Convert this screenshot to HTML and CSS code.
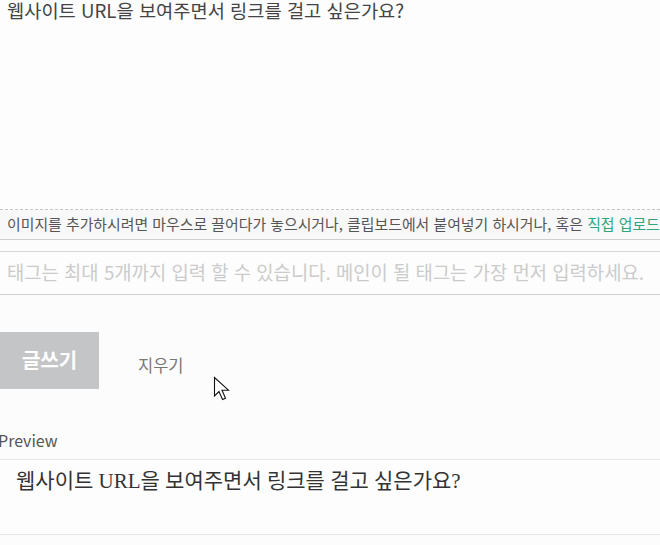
FILE: index.html
```html
<!DOCTYPE html>
<html lang="ko">
<head>
    <meta charset="UTF-8">
    <title>글쓰기</title>
    <link rel="stylesheet" href="styles.css">
</head>
<body>
    <div class="write-form">
        <div class="editor">
            <div class="editor-text">웹사이트 URL을 보여주면서 링크를 걸고 싶은가요?</div>
        </div>
        <div class="upload-hint">
            이미지를 추가하시려면 마우스로 끌어다가 놓으시거나, 클립보드에서 붙여넣기 하시거나, 혹은 <a href="#" class="upload-link">직접 업로드</a>하세요.
        </div>

        <div class="tag-input">태그는 최대 5개까지 입력 할 수 있습니다. 메인이 될 태그는 가장 먼저 입력하세요.</div>

        <div class="actions">
            <button class="submit-btn">글쓰기</button>
            <button class="clear-btn">지우기</button>
        </div>

        <div class="preview-label">Preview</div>
        <div class="preview">
            <p>웹사이트 URL을 보여주면서 링크를 걸고 싶은가요?</p>
        </div>
    </div>

    <svg class="mouse-cursor" width="20" height="28" viewBox="0 0 20 28">
        <path d="M1.5 1.5 L1.5 20 L6 15.5 L9.5 23.5 L12.5 22.2 L9 14.2 L15.5 14.2 Z" fill="#fff" stroke="#111" stroke-width="1.1" stroke-linejoin="miter"/>
    </svg>
</body>
</html>
```

FILE: styles.css
```css
html, body {
    margin: 0;
    padding: 0;
    background: #fcfcfc;
    overflow: hidden;
}

body {
    width: 660px;
    height: 545px;
    position: relative;
    font-family: "Noto Sans CJK KR", "Noto Sans", sans-serif;
}

.write-form {
    width: 660px;
}

.editor {
    height: 209px;
    border-bottom: 1px dashed #c4c4c4;
    background: #fdfdfd;
    overflow: hidden;
}

.editor-text {
    padding: 0 7px;
    font-size: 18.7px;
    line-height: 20px;
    color: #444;
    white-space: nowrap;
}

.upload-hint {
    height: 29px;
    line-height: 27px;
    padding: 0 7px;
    font-size: 14.9px;
    color: #555;
    background: #f8f8f8;
    border-bottom: 1px solid #cfcfcf;
    white-space: nowrap;
    overflow: hidden;
}

.upload-link {
    color: #2aa87a;
    text-decoration: none;
}

.tag-input {
    margin-top: 11px;
    height: 42px;
    line-height: 40px;
    padding: 0 7px;
    font-size: 18.8px;
    color: #cbcbcb;
    border-top: 1px solid #d8d8d8;
    border-bottom: 1px solid #cfcfcf;
    background: #fdfdfd;
    white-space: nowrap;
    overflow: hidden;
}

.actions {
    display: flex;
    align-items: center;
    margin-top: 37px;
    height: 57px;
}

.submit-btn {
    width: 99px;
    height: 57px;
    border: none;
    background: #c4c5c7;
    color: #fff;
    font-family: inherit;
    font-size: 20px;
    font-weight: bold;
    padding: 0 0 3px;
}

.clear-btn {
    margin-left: 39px;
    margin-top: 9px;
    border: none;
    background: none;
    padding: 0;
    font-family: inherit;
    font-size: 16.5px;
    color: #777;
}

.preview-label {
    margin-top: 40px;
    margin-left: -2px;
    font-size: 16px;
    line-height: 22px;
    color: #555;
}

.preview {
    margin-top: 8px;
    height: 74px;
    border-top: 1px solid #e6e6e6;
    border-bottom: 1px solid #e6e6e6;
    background: #fdfdfd;
}

.preview p {
    margin: 0;
    padding: 8px 16px 0;
    font-family: "Liberation Serif", "Noto Sans CJK KR", serif;
    font-size: 21px;
    line-height: 26px;
    color: #333;
    white-space: nowrap;
}

.mouse-cursor {
    position: absolute;
    left: 213px;
    top: 376px;
}
```
